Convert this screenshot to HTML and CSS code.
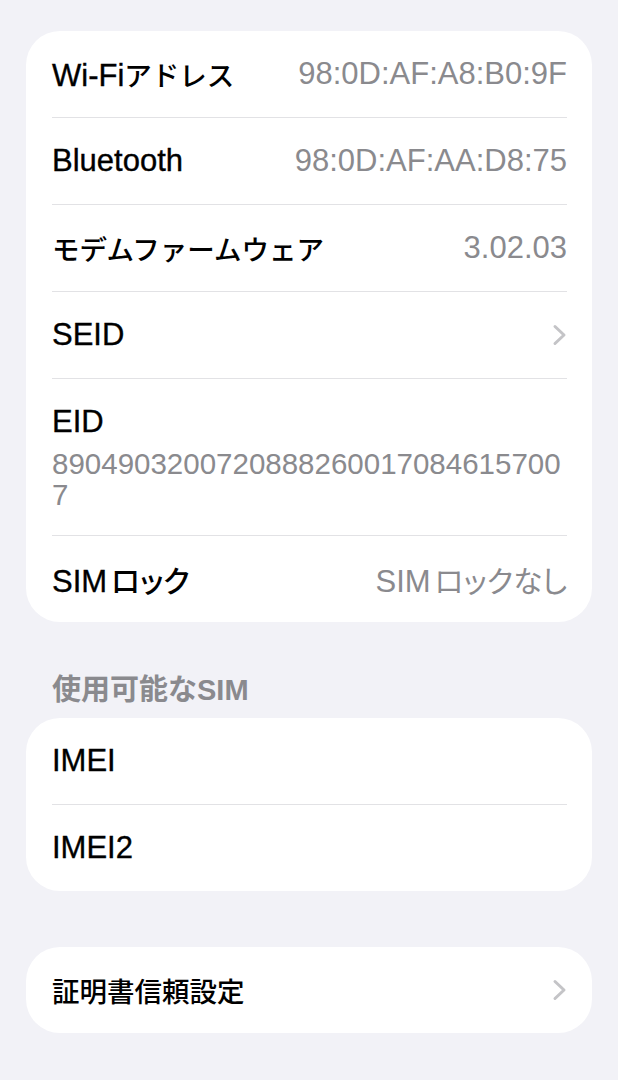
FILE: index.html
```html
<!DOCTYPE html>
<html lang="ja">
<head>
    <meta charset="UTF-8">
    <meta name="viewport" content="width=device-width, initial-scale=1.0">
    <title>情報</title>
    <link rel="stylesheet" href="styles.css">
</head>
<body>
    <div class="group first">
        <div class="row">
            <span class="label">Wi-Fi<span class="ja">アドレス</span></span>
            <span class="value">98:0D:AF:A8:B0:9F</span>
        </div>
        <div class="row">
            <span class="label">Bluetooth</span>
            <span class="value">98:0D:AF:AA:D8:75</span>
        </div>
        <div class="row">
            <span class="label ja">モデムファームウェア</span>
            <span class="value">3.02.03</span>
        </div>
        <div class="row">
            <span class="label">SEID</span>
            <svg class="chevron" width="15" height="22" viewBox="0 0 15 22">
                <polyline points="3,2.5 12,11 3,19.5" fill="none" stroke="#c4c4c7" stroke-width="3" stroke-linecap="round" stroke-linejoin="round"/>
            </svg>
        </div>
        <div class="row tall">
            <div class="label">EID</div>
            <div class="eid">89049032007208882600170846157007</div>
        </div>
        <div class="row">
            <span class="label">SIM<span class="ja tight">ロック</span></span>
            <span class="value">SIM<span class="ja tight">ロックなし</span></span>
        </div>
    </div>

    <div class="header">使用可能な<span class="latin">SIM</span></div>
    <div class="group">
        <div class="row">
            <span class="label">IMEI</span>
        </div>
        <div class="row">
            <span class="label">IMEI2</span>
        </div>
    </div>

    <div class="group last">
        <div class="row">
            <span class="label ja">証明書信頼設定</span>
            <svg class="chevron" width="15" height="22" viewBox="0 0 15 22">
                <polyline points="3,2.5 12,11 3,19.5" fill="none" stroke="#c4c4c7" stroke-width="3" stroke-linecap="round" stroke-linejoin="round"/>
            </svg>
        </div>
    </div>
</body>
</html>
```

FILE: styles.css
```css
body {
    margin: 0;
    background-color: #f2f2f7;
    font-family: "Liberation Sans", "Noto Sans CJK JP", sans-serif;
    font-size: 31px;
    color: #000;
}

.group {
    background-color: #ffffff;
    border-radius: 34px;
    margin: 0 26px;
    padding: 0 25px 0 26px;
}

.group.first {
    margin-top: 31px;
}

.group.last {
    margin-top: 56px;
}

.row {
    display: flex;
    align-items: center;
    justify-content: space-between;
    height: 86px;
    border-bottom: 1px solid #e2e2e5;
}

.row:last-child {
    border-bottom: none;
}

.row.tall {
    display: block;
    height: auto;
    padding-top: 25px;
    padding-bottom: 25px;
}

.row.tall .label {
    line-height: 36px;
}

.label {
    -webkit-text-stroke: 0.35px #000;
}

.ja {
    font-size: 27.5px;
    font-weight: 500;
    -webkit-text-stroke: 0;
}

.ja.tight {
    font-size: 29.5px;
    margin-left: 4px;
    font-feature-settings: "palt";
}

.value {
    color: #8a8a8e;
}

.value .ja {
    font-weight: 400;
}

.eid {
    color: #8a8a8e;
    font-size: 29.5px;
    line-height: 31px;
    margin-top: 8px;
    word-break: break-all;
    -webkit-text-stroke: 0;
}

.chevron {
    display: block;
}

.header {
    margin: 51px 52px 11px;
    line-height: 34px;
    font-size: 29px;
    font-weight: 700;
    color: #8a8a8e;
}
```
